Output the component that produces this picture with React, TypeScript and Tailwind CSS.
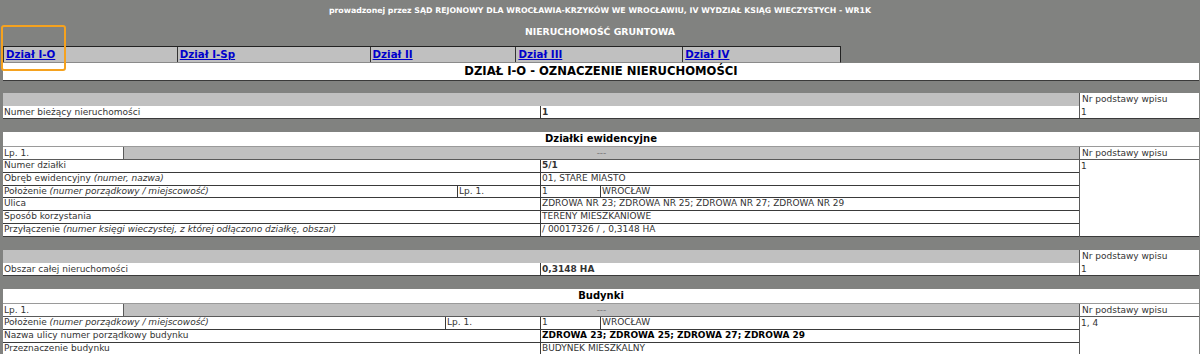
import React from 'react'

const dark = 'border-[#3a3a3a]'

function GrayGap({ h = 'h-[13px]', top = false }: { h?: string; top?: boolean }) {
  return <div className={`${h} ${top ? `border-t ${dark}` : ''} bg-[#818280]`} />
}

function HeaderRow() {
  return (
    <div className="flex h-[13px]">
      <div className="flex-1 bg-[#c0c0c0] border-r border-[#5a5a5a]" />
      <div className="w-[119px] bg-white px-[2px] leading-[13px]">Nr podstawy wpisu</div>
    </div>
  )
}

function LpRow() {
  return (
    <div className="flex h-[13px] border-t border-[#9a9a9a]">
      <div className="w-[121px] bg-white px-[1px] leading-[12px] border-r border-[#5a5a5a]">Lp. 1.</div>
      <div className="flex-1 bg-[#c0c0c0] text-center text-[#777] leading-[12px] border-r border-[#5a5a5a]">---</div>
      <div className="w-[119px] bg-white px-[2px] leading-[12px]">Nr podstawy wpisu</div>
    </div>
  )
}

function TitleRow({ children }: { children: React.ReactNode }) {
  return (
    <div className="h-[14px] bg-white text-center font-bold text-black text-[10px] leading-[14px]">
      {children}
    </div>
  )
}

function Row({
  label,
  value,
  h = 'h-[12.75px]',
}: {
  label: React.ReactNode
  value: React.ReactNode
  h?: string
}) {
  return (
    <div className={`flex ${h} bg-white border-b ${dark} items-center`}>
      <div className={`w-[538px] px-[1px] border-r ${dark} h-full flex items-center whitespace-nowrap`}>{label}</div>
      <div className="flex-1 px-[1px] h-full flex items-center whitespace-nowrap">{value}</div>
    </div>
  )
}

function LocationRow({ lpLeft, h = 'h-[12.75px]' }: { lpLeft: string; h?: string }) {
  return (
    <div className={`flex ${h} bg-white border-b ${dark}`}>
      <div className={`${lpLeft} px-[1px] flex items-center whitespace-nowrap`}>
        Położenie&nbsp;<i>(numer porządkowy / miejscowość)</i>
      </div>
      <div className={`flex-1 px-[1px] border-l ${dark} border-r flex items-center`}>Lp. 1.</div>
      <div className={`w-[60px] px-[1px] border-r ${dark} flex items-center`}>1</div>
      <div className="w-[478px] px-[1px] flex items-center">WROCŁAW</div>
    </div>
  )
}

const tabs = [
  { label: 'Dział I-O', w: 'w-[174px]' },
  { label: 'Dział I-Sp', w: 'w-[193px]' },
  { label: 'Dział II', w: 'w-[146px]' },
  { label: 'Dział III', w: 'w-[167px]' },
  { label: 'Dział IV', w: 'w-[158px]' },
]

export default function App() {
  return (
    <div className="relative w-[1200px] h-[354px] overflow-hidden bg-[#818280] font-['DejaVu_Sans',sans-serif] text-[9px] text-[#333]">
      {/* Header */}
      <div className="h-[22px] flex items-center justify-center text-white font-bold text-[7.8px] whitespace-nowrap">
        prowadzonej przez SĄD REJONOWY DLA WROCŁAWIA-KRZYKÓW WE WROCŁAWIU, IV WYDZIAŁ KSIĄG WIECZYSTYCH - WR1K
      </div>
      <div className="h-[20px] flex items-center justify-center text-white font-bold text-[9.3px]">
        NIERUCHOMOŚĆ GRUNTOWA
      </div>
      <div className="h-[4px]" />

      {/* Tabs */}
      <div className="ml-[3px] flex h-[17px] w-[838px] border-t border-[#222] border-r border-b-[#8a8a8a] border-b">
        {tabs.map((t) => (
          <div
            key={t.label}
            className={`${t.w} bg-[#c0c0c0] border-l border-[#333] px-[2px] flex items-center`}
          >
            <a href="#" className="text-[#0000cc] underline font-bold text-[10.3px] leading-none">
              {t.label}
            </a>
          </div>
        ))}
      </div>

      <div className="ml-[3px] mr-[1px]">
        <div className="h-[17px] bg-white text-center font-bold text-black text-[11.6px] leading-[17px]">
          DZIAŁ I-O - OZNACZENIE NIERUCHOMOŚCI
        </div>

        <GrayGap top />
        <HeaderRow />
        <div className={`flex h-[13px] bg-white border-b ${dark}`}>
          <div className={`w-[538px] px-[1px] border-r ${dark} leading-[12.5px]`}>Numer bieżący nieruchomości</div>
          <div className="w-[539px] px-[1px] font-bold leading-[12.5px] border-r border-[#5a5a5a]">1</div>
          <div className="flex-1 px-[1px] leading-[12.5px]">1</div>
        </div>
        <GrayGap />

        <TitleRow>Działki ewidencyjne</TitleRow>
        <LpRow />
        <div className="flex border-t border-[#5a5a5a]">
          <div className="w-[1077px] border-r border-[#5a5a5a]">
            <Row label="Numer działki" value={<b>5/1</b>} />
            <Row
              label={
                <>
                  Obręb ewidencyjny&nbsp;<i>(numer, nazwa)</i>
                </>
              }
              value="01, STARE MIASTO"
            />
            <LocationRow lpLeft="w-[454px]" />
            <Row label="Ulica" value="ZDROWA NR 23; ZDROWA NR 25; ZDROWA NR 27; ZDROWA NR 29" />
            <Row label="Sposób korzystania" value="TERENY MIESZKANIOWE" />
            <Row
              label={
                <>
                  Przyłączenie&nbsp;<i>(numer księgi wieczystej, z której odłączono działkę, obszar)</i>
                </>
              }
              value="/ 00017326 / , 0,3148 HA"
            />
          </div>
          <div className={`flex-1 bg-white border-b ${dark} px-[1px] leading-[12px]`}>1</div>
        </div>

        <GrayGap />
        <HeaderRow />
        <div className={`flex h-[13.5px] bg-white border-b ${dark}`}>
          <div className={`w-[538px] px-[1px] border-r ${dark} leading-[12.5px]`}>Obszar całej nieruchomości</div>
          <div className="w-[539px] px-[1px] font-bold leading-[12.5px] border-r border-[#5a5a5a]">0,3148 HA</div>
          <div className="flex-1 px-[1px] leading-[12.5px]">1</div>
        </div>
        <GrayGap />

        <TitleRow>Budynki</TitleRow>
        <LpRow />
        <div className="flex border-t border-[#5a5a5a]">
          <div className="w-[1077px] border-r border-[#5a5a5a]">
            <LocationRow lpLeft="w-[442px]" h="h-[13px]" />
            <Row
              h="h-[13px]"
              label="Nazwa ulicy numer porządkowy budynku"
              value={<b className="text-black">ZDROWA 23; ZDROWA 25; ZDROWA 27; ZDROWA 29</b>}
            />
            <Row h="h-[13px]" label="Przeznaczenie budynku" value="BUDYNEK MIESZKALNY" />
          </div>
          <div className="flex-1 bg-white px-[1px] leading-[12px]">1, 4</div>
        </div>
      </div>

      {/* highlight around the active tab */}
      <div className="absolute left-[1px] top-[25px] w-[65px] h-[46px] border-2 border-[#f5a21f] rounded-[3px]" />
    </div>
  )
}
